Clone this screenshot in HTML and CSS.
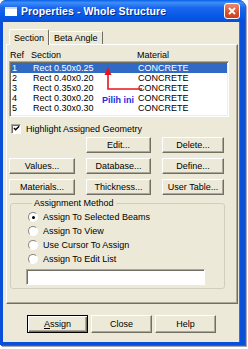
FILE: index.html
```html
<!DOCTYPE html>
<html lang="en">
<head>
    <meta charset="UTF-8">
    <meta name="viewport" content="width=device-width, initial-scale=1.0">
    <link rel="stylesheet" href="styles.css">
    <title>Properties - Whole Structure</title>
</head>
<body>

    <div class="window">
        <div class="titlebar">
            <span class="title-icon"></span>
            <span class="title-text">Properties - Whole Structure</span>
            <span class="close-btn">
                <svg viewBox="0 0 10 10">
                    <path d="M2 2 L8 8 M8 2 L2 8" stroke="#fff" stroke-width="1.8"/>
                </svg>
            </span>
        </div>

        <div class="client">
            <div class="tabs">
                <div class="tab tab-active">Section</div>
                <div class="tab">Beta Angle</div>
            </div>

            <div class="panel">
                <div class="list-head">
                    <span class="col-ref">Ref</span>
                    <span class="col-sec">Section</span>
                    <span class="col-mat">Material</span>
                </div>

                <div class="list">
                    <div class="row row-selected">
                        <span class="col-ref">1</span>
                        <span class="col-sec">Rect 0.50x0.25</span>
                        <span class="col-mat">CONCRETE</span>
                    </div>
                    <div class="row">
                        <span class="col-ref">2</span>
                        <span class="col-sec">Rect 0.40x0.20</span>
                        <span class="col-mat">CONCRETE</span>
                    </div>
                    <div class="row">
                        <span class="col-ref">3</span>
                        <span class="col-sec">Rect 0.35x0.20</span>
                        <span class="col-mat">CONCRETE</span>
                    </div>
                    <div class="row">
                        <span class="col-ref">4</span>
                        <span class="col-sec">Rect 0.30x0.20</span>
                        <span class="col-mat">CONCRETE</span>
                    </div>
                    <div class="row">
                        <span class="col-ref">5</span>
                        <span class="col-sec">Rect 0.30x0.30</span>
                        <span class="col-mat">CONCRETE</span>
                    </div>

                    <!-- hand drawn note on top of the list -->
                    <svg class="note-arrow" viewBox="0 0 40 26">
                        <path d="M4 1 L0.5 9 L7.5 9 Z" fill="#e8141b"/>
                        <path d="M4 8 V23 H38" stroke="#e8141b" stroke-width="1.6" fill="none"/>
                    </svg>
                    <span class="note-text">Pilih ini</span>
                </div>

                <label class="check-row">
                    <span class="checkbox">
                        <svg viewBox="0 0 8 8">
                            <path d="M1 3.5 L3 5.5 L7 1.5" stroke="#000" stroke-width="1.6" fill="none"/>
                        </svg>
                    </span>
                    Highlight Assigned Geometry
                </label>

                <div class="btn-grid">
                    <span></span>
                    <button class="btn">Edit...</button>
                    <button class="btn">Delete...</button>
                    <button class="btn">Values...</button>
                    <button class="btn">Database...</button>
                    <button class="btn">Define...</button>
                    <button class="btn">Materials...</button>
                    <button class="btn">Thickness...</button>
                    <button class="btn">User Table...</button>
                </div>

                <fieldset class="group">
                    <legend>Assignment Method</legend>
                    <div class="radio-row"><span class="radio radio-on"></span>Assign To Selected Beams</div>
                    <div class="radio-row"><span class="radio"></span>Assign To View</div>
                    <div class="radio-row"><span class="radio"></span>Use Cursor To Assign</div>
                    <div class="radio-row"><span class="radio"></span>Assign To Edit List</div>
                    <div class="text-box"></div>
                </fieldset>
            </div>

            <div class="footer">
                <button class="btn btn-wide btn-default"><u>A</u>ssign</button>
                <button class="btn btn-wide">Close</button>
                <button class="btn btn-wide">Help</button>
            </div>
        </div>
    </div>

</body>
</html>
```

FILE: styles.css
```css
* {
    margin: 0;
    padding: 0;
    box-sizing: border-box;
}

body {
    width: 248px;
    height: 349px;
    background-color: #fff;
    font-family: "Liberation Sans", Arial, sans-serif;
    font-size: 9px;
    color: #000;
    overflow: hidden;
}

.window {
    width: 245px;
    height: 345px;
    display: flex;
    flex-direction: column;
    background-color: #0a4fd8;
    border-radius: 6px 6px 0 0;
    box-shadow: 1px 1px 0 #5a5a6a, 2px 2px 0 #a8a8b0;
}

/* title bar */
.titlebar {
    height: 22px;
    display: flex;
    align-items: center;
    padding: 0 5px 0 5px;
    border-radius: 6px 6px 0 0;
    background: linear-gradient(to bottom, #0a5ee8 0%, #3d8ff8 12%, #1a66ee 35%, #0658e6 75%, #0a4ed6 100%);
}
.title-icon {
    width: 12px;
    height: 9px;
    background-color: #fff;
    border-top: 2px solid #cfd8f0;
    margin-right: 4px;
}
.title-text {
    flex-grow: 1;
    color: #fff;
    font-family: "Liberation Sans", Arial, sans-serif;
    font-weight: bold;
    font-size: 10.5px;
    letter-spacing: 0.1px;
    text-shadow: 1px 1px 0 #0a2a8a;
}
.close-btn {
    width: 16px;
    height: 16px;
    border: 1px solid #fff;
    border-radius: 3px;
    background: linear-gradient(to bottom, #f0886c, #d9502c 60%, #c8401e);
    display: flex;
    align-items: center;
    justify-content: center;
}
.close-btn svg {
    width: 10px;
    height: 10px;
}

/* dialog body */
.client {
    flex-grow: 1;
    margin: 0 5px 3px 3px;
    background-color: #ece9d8;
    border-right: 1px solid #6f6d62;
    display: flex;
    flex-direction: column;
}

.tabs {
    display: flex;
    align-items: flex-end;
    height: 22px;
    padding-left: 6px;
}
.tab {
    height: 13px;
    padding: 0 4px;
    border: 1px solid #fff;
    border-right-color: #716f64;
    border-bottom: none;
    display: flex;
    align-items: center;
}
.tab-active {
    height: 16px;
    padding: 0 4px 0 4px;
    margin-bottom: -1px;
    background-color: #ece9d8;
    position: relative;
    z-index: 1;
    border-radius: 2px 2px 0 0;
}

.panel {
    margin: 0 1px 0 3px;
    height: 260px;
    border: 1px solid #fff;
    border-right-color: #716f64;
    border-bottom-color: #716f64;
    box-shadow: inset -1px -1px 0 #aca899;
}

/* list */
.list-head {
    display: flex;
    height: 10px;
    margin-top: 5px;
    line-height: 10px;
    padding-left: 2px;
}
.list-head .col-ref { width: 22px; padding-left: 1px; }
.list-head .col-sec { width: 106px; }

.list {
    position: relative;
    margin: 1px 0 0 2px;
    width: 220px;
    height: 56px;
    background-color: #fff;
    border: 1px solid #aca899;
    border-right-color: #fff;
    border-bottom-color: #fff;
    box-shadow: inset 1px 1px 0 #716f64, inset -1px -1px 0 #f1efe2;
    padding: 1px 1px 0 1px;
}
.row {
    display: flex;
    height: 10px;
    line-height: 10px;
    padding-left: 1px;
}
.row-selected {
    background-color: #316ac5;
    color: #fff;
}
.col-ref { width: 21px; }
.col-sec { width: 105px; }

.note-arrow {
    position: absolute;
    left: 94px;
    top: 4px;
    width: 40px;
    height: 26px;
}
.note-text {
    position: absolute;
    left: 92px;
    top: 33px;
    color: #1a2ee0;
    font-weight: bold;
    font-size: 9px;
    line-height: 10px;
}

/* checkbox */
.check-row {
    display: flex;
    align-items: center;
    height: 11px;
    margin: 6px 0 0 4px;
    gap: 5px;
}
.checkbox {
    width: 10px;
    height: 10px;
    background-color: #fff;
    border: 1px solid #aca899;
    border-right-color: #fff;
    border-bottom-color: #fff;
    box-shadow: inset 1px 1px 0 #716f64;
    display: flex;
    align-items: center;
    justify-content: center;
}
.checkbox svg {
    width: 7px;
    height: 7px;
}

/* buttons */
.btn-grid {
    display: grid;
    grid-template-columns: 66px 65px 62px;
    grid-auto-rows: 16px;
    column-gap: 11px;
    row-gap: 5px;
    margin: 3px 0 0 2px;
}
.btn {
    font-family: "Liberation Sans", Arial, sans-serif;
    font-size: 9px;
    color: #000;
    white-space: nowrap;
    background-color: #ece9d8;
    border: 1px solid #fff;
    border-right-color: #716f64;
    border-bottom-color: #716f64;
    box-shadow: inset -1px -1px 0 #aca899;
}

/* assignment group */
.group {
    margin: 3px 0 0 3px;
    width: 215px;
    height: 91px;
    border: 1px solid #d0cebf;
    border-radius: 3px;
    padding: 2px 0 0 17px;
}
.group legend {
    padding: 0 2px;
    margin-left: 4px;
    line-height: 10px;
}
.radio-row {
    display: flex;
    align-items: center;
    height: 14px;
    gap: 5px;
}
.radio {
    width: 10px;
    height: 10px;
    border-radius: 50%;
    background-color: #fff;
    border: 1px solid #8a887c;
    border-right-color: #fff;
    border-bottom-color: #fff;
    display: flex;
    align-items: center;
    justify-content: center;
}
.radio-on::after {
    content: "";
    width: 3px;
    height: 3px;
    border-radius: 50%;
    background-color: #000;
}
.text-box {
    margin: 3px 0 0 -2px;
    width: 179px;
    height: 16px;
    background-color: #fff;
    border: 1px solid #aca899;
    border-right-color: #fff;
    border-bottom-color: #fff;
    box-shadow: inset 1px 1px 0 #716f64;
}

/* bottom buttons */
.footer {
    display: flex;
    gap: 3px;
    margin: 11px 0 0 24px;
}
.btn-wide {
    width: 61px;
    height: 18px;
}
.btn-default {
    border: 1px solid #000;
    box-shadow: inset 1px 1px 0 #fff, inset -1px -1px 0 #716f64, inset -2px -2px 0 #aca899;
}
```
